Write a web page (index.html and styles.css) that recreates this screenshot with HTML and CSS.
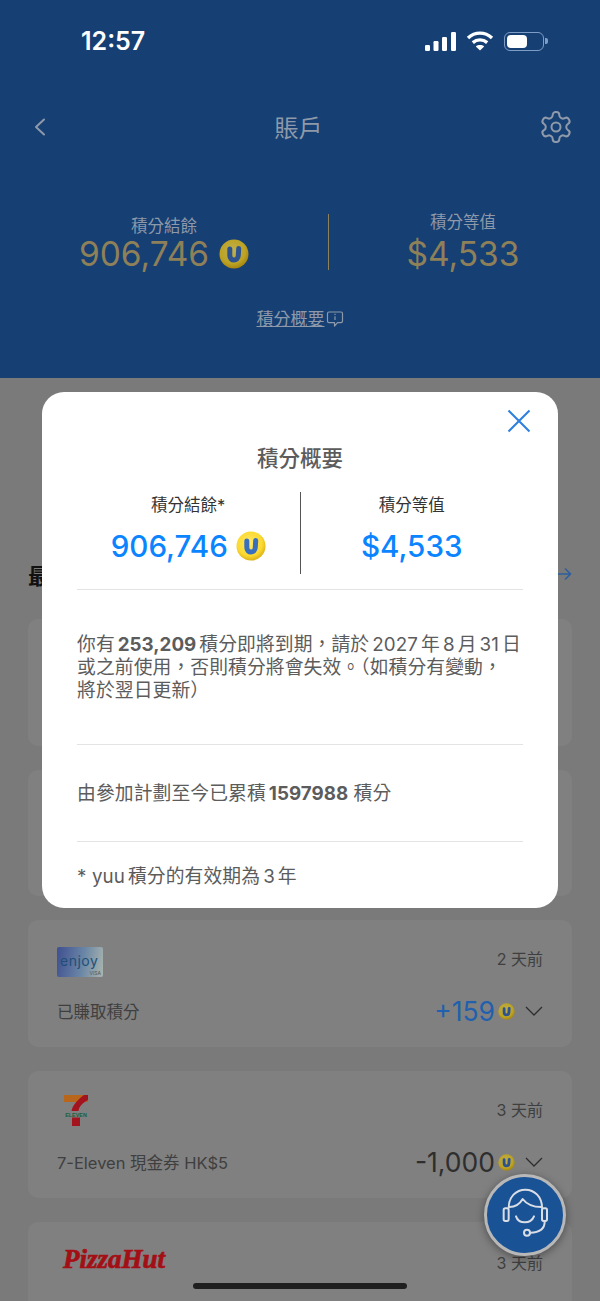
FILE: index.html
```html
<!DOCTYPE html>
<html lang="zh-Hant">
<head>
    <title>賬戶 - 積分概要</title>
    <meta charset="utf-8">
    <meta name="viewport" content="width=device-width, initial-scale=1.0">
    <link rel="stylesheet" href="styles.css">
</head>
<body>
    <!-- shared coin icon -->
    <svg class="defs" aria-hidden="true">
        <defs>
            <radialGradient id="coinFill" cx="45%" cy="40%" r="62%">
                <stop offset="0%" stop-color="#ffe96a"/>
                <stop offset="70%" stop-color="#fbd92f"/>
                <stop offset="100%" stop-color="#dcae14"/>
            </radialGradient>
            <symbol id="coin" viewBox="0 0 30 30">
                <circle cx="15" cy="15" r="14.5" fill="url(#coinFill)"/>
                <path d="M10.800 10 V16.500 C10.800 22.600 19 22.600 19.300 16.500 L19.700 9.500" fill="none" stroke="#3a6fc0" stroke-width="5" stroke-linecap="round"/>
            </symbol>
        </defs>
    </svg>

    <div class="screen">
        <div class="header">
            <div class="status-bar">
                <span class="time">12:57</span>
                <div class="status-icons">
                    <svg width="31" height="19" viewBox="0 0 31 19" fill="#fff">
                        <rect x="0" y="13" width="5" height="6" rx="1.2"/>
                        <rect x="8.5" y="9" width="5" height="10" rx="1.2"/>
                        <rect x="17" y="5" width="5" height="14" rx="1.2"/>
                        <rect x="26" y="0" width="5" height="19" rx="1.2"/>
                    </svg>
                    <svg width="28" height="20" viewBox="0 0 28 20" fill="none" stroke="#fff" stroke-width="3.4">
                        <path d="M2 7 C9 0.5 19 0.5 26 7"/>
                        <path d="M6.8 11.6 C11 8 17 8 21.2 11.6"/>
                        <path d="M14 19.5 L9.8 15.4 C12 13.6 16 13.6 18.2 15.4 Z" fill="#fff" stroke="none"/>
                    </svg>
                    <div class="battery"><div class="battery-fill"></div></div>
                </div>
            </div>

            <div class="nav">
                <svg width="14" height="18" viewBox="0 0 14 18" fill="none" stroke="#8e99a9" stroke-width="2" stroke-linecap="round" stroke-linejoin="round">
                    <path d="M11 1.5 L3 9 L11 16.5"/>
                </svg>
                <span class="nav-title">賬戶</span>
                <svg width="36" height="36" viewBox="0 0 24 24" fill="none" stroke="#8e99a9" stroke-width="1.35" stroke-linejoin="round">
                    <path d="M12.22 2h-.44a2 2 0 0 0-2 2v.18a2 2 0 0 1-1 1.73l-.43.25a2 2 0 0 1-2 0l-.15-.08a2 2 0 0 0-2.73.73l-.22.38a2 2 0 0 0 .73 2.73l.15.1a2 2 0 0 1 1 1.72v.51a2 2 0 0 1-1 1.74l-.15.09a2 2 0 0 0-.73 2.73l.22.38a2 2 0 0 0 2.73.73l.15-.08a2 2 0 0 1 2 0l.43.25a2 2 0 0 1 1 1.73V20a2 2 0 0 0 2 2h.44a2 2 0 0 0 2-2v-.18a2 2 0 0 1 1-1.73l.43-.25a2 2 0 0 1 2 0l.15.08a2 2 0 0 0 2.73-.73l.22-.39a2 2 0 0 0-.73-2.73l-.15-.08a2 2 0 0 1-1-1.74v-.5a2 2 0 0 1 1-1.74l.15-.09a2 2 0 0 0 .73-2.73l-.22-.38a2 2 0 0 0-2.73-.73l-.15.08a2 2 0 0 1-2 0l-.43-.25a2 2 0 0 1-1-1.73V4a2 2 0 0 0-2-2z"/>
                    <circle cx="12" cy="12" r="3"/>
                </svg>
            </div>

            <div class="summary">
                <div class="summary-col summary-left">
                    <div class="summary-label">積分結餘</div>
                    <div class="summary-value">906,746<svg class="coin-lg coin-dim"><use href="#coin"/></svg></div>
                </div>
                <div class="summary-col summary-right">
                    <div class="summary-label">積分等值</div>
                    <div class="summary-value">$4,533</div>
                </div>
            </div>

            <div class="summary-link">
                <span class="summary-link-text">積分概要</span>
                <svg width="18" height="18" viewBox="0 0 18 18" fill="none" stroke="#8e99a9" stroke-width="1.2" stroke-linejoin="round">
                    <path d="M3 2 H15 C16 2 16.5 2.6 16.5 3.5 V11 C16.5 12 16 12.6 15 12.6 H11.5 L8.5 16 V12.6 H3 C2 12.6 1.5 12 1.5 11 V3.5 C1.5 2.6 2 2 3 2 Z"/>
                    <path d="M9 6.2 V10 M9 3.8 V5"/>
                </svg>
            </div>
        </div>

        <div class="content">
            <div class="section-head">
                <span class="section-title">最近交易</span>
                <svg width="16" height="14" viewBox="0 0 16 14" fill="none" stroke="#2c5f9e" stroke-width="1.6">
                    <path d="M1 7 H14.5 M9 1.5 L14.5 7 L9 12.5"/>
                </svg>
            </div>

            <div class="card-list">
                <div class="card"></div>
                <div class="card"></div>

                <div class="card">
                    <div class="card-row">
                        <div class="bank-card">
                            <span class="bank-card-name">enjoy</span>
                            <span class="bank-card-visa">VISA</span>
                        </div>
                        <span class="card-date">2 天前</span>
                    </div>
                    <div class="card-row">
                        <span class="card-label">已賺取積分</span>
                        <div class="card-amount">
                            <span class="amount-plus">+159</span>
                            <svg class="coin-sm coin-dim"><use href="#coin"/></svg>
                            <svg class="chevron" viewBox="0 0 18 10"><path d="M1 1 L9 9 L17 1"/></svg>
                        </div>
                    </div>
                </div>

                <div class="card">
                    <div class="card-row">
                        <svg class="logo-seven" viewBox="0 0 24 31">
                            <path d="M0 0 H24 V7 H0 Z" fill="#b8661c"/>
                            <path d="M24 0 V5 C18 8 15 12 14.500 16 H7.500 C8.500 10 14 4.500 20 0 Z" fill="#a3141e"/>
                            <rect x="8" y="22.500" width="8" height="8.500" fill="#a3141e"/>
                            <text class="logo-seven-text" x="12" y="22" text-anchor="middle">ELEVEN</text>
                        </svg>
                        <span class="card-date">3 天前</span>
                    </div>
                    <div class="card-row">
                        <span class="card-label">7-Eleven 現金券 HK$5</span>
                        <div class="card-amount">
                            <span class="amount-minus">-1,000</span>
                            <svg class="coin-sm coin-dim"><use href="#coin"/></svg>
                            <svg class="chevron" viewBox="0 0 18 10"><path d="M1 1 L9 9 L17 1"/></svg>
                        </div>
                    </div>
                </div>

                <div class="card">
                    <div class="card-row">
                        <span class="logo-pizza">PizzaHut</span>
                        <span class="card-date card-date-low">3 天前</span>
                    </div>
                </div>
            </div>
        </div>

        <div class="home-bar"></div>

        <div class="fab">
            <svg width="76" height="76" viewBox="35 38 228 228" fill="none" stroke="#d9dee6" stroke-width="6" stroke-linecap="round" stroke-linejoin="round">
                <path d="M100 130 C100 98 122 76 150 76 C178 76 200 98 200 130"/>
                <path d="M102 128 C120 128 134 118 142 104 C154 120 174 128 198 128"/>
                <rect x="85" y="132" width="15" height="38" rx="5"/>
                <rect x="200" y="132" width="15" height="38" rx="5"/>
                <path d="M122 156 C130 180 166 180 176 156"/>
                <path d="M208 172 C208 194 190 204 165 205"/>
                <circle cx="155" cy="205" r="9"/>
            </svg>
        </div>

        <div class="modal">
            <svg class="modal-close" width="24" height="24" viewBox="0 0 24 24" fill="none" stroke="#2f80de" stroke-width="2.100">
                <path d="M1.500 1.500 L22.500 22.500 M22.500 1.500 L1.500 22.500"/>
            </svg>
            <h2 class="modal-title">積分概要</h2>

            <div class="modal-stats">
                <div class="modal-col">
                    <div class="modal-label">積分結餘*</div>
                    <div class="modal-value">906,746<svg class="coin-lg"><use href="#coin"/></svg></div>
                </div>
                <div class="modal-col">
                    <div class="modal-label">積分等值</div>
                    <div class="modal-value">$4,533</div>
                </div>
            </div>

            <div class="modal-section modal-expiry">
                你有<span class="gap"></span><b>253,209</b><span class="gap"></span>積分即將到期，請於<span class="gap"></span>2027<span class="gap"></span>年<span class="gap"></span>8<span class="gap"></span>月<span class="gap"></span>31<span class="gap"></span>日<br>
                或之前使用，否則積分將會失效。（如積分有變動，<br>
                將於翌日更新）
            </div>
            <div class="modal-section modal-total">
                由參加計劃至今已累積<span class="gap"></span><b>1597988</b> 積分
            </div>
            <div class="modal-section modal-note">
                * yuu<span class="gap"></span>積分的有效期為<span class="gap"></span>3<span class="gap"></span>年
            </div>
        </div>
    </div>
</body>
</html>
```

FILE: styles.css
```css
* {
    box-sizing: border-box;
}

body {
    margin: 0;
    padding: 0;
    font-family: Inter, "Noto Sans CJK TC", sans-serif;
    background-color: #7a7a7a;
}

.defs {
    position: absolute;
    width: 0;
    height: 0;
}

/* everything behind the modal already carries its dimmed colour */
.screen {
    position: relative;
    width: 600px;
    height: 1301px;
    overflow: hidden;
    background-color: #7a7a7a;
}

.coin-dim {
    filter: brightness(0.75);
}

/* header */
.header {
    height: 378px;
    background-color: #163f73;
    color: #8e99a9;
}

.status-bar {
    height: 82px;
    padding: 0 51px 0 81px;
    display: flex;
    align-items: center;
    justify-content: space-between;
}

.time {
    font-size: 25px;
    font-weight: 600;
    color: #fff;
}

.status-icons {
    display: flex;
    align-items: center;
    gap: 10px;
}

.battery {
    position: relative;
    width: 40px;
    height: 19px;
    padding: 2px;
    margin-right: 5px;
    border: 1.5px solid #7f9cc4;
    border-radius: 6px;
}

.battery::after {
    content: "";
    position: absolute;
    right: -4.500px;
    top: 5px;
    width: 3px;
    height: 6px;
    background-color: #7f9cc4;
    border-radius: 0 2px 2px 0;
}

.battery-fill {
    width: 20px;
    height: 100%;
    background-color: #fff;
    border-radius: 4px;
}

.nav {
    height: 90px;
    padding: 0 26px 0 33px;
    display: flex;
    align-items: center;
    justify-content: space-between;
}

.nav-title {
    margin: -2px 0 0 12px;
    font-size: 24px;
}

.summary {
    height: 56px;
    margin-top: 42px;
    display: flex;
}

.summary-col {
    display: flex;
    flex-direction: column;
    align-items: center;
}

.summary-left {
    width: 329px;
    padding-top: 2px;
    border-right: 1.500px solid #8e8058;
}

.summary-right {
    flex: 1;
    margin-top: -2px;
    padding-right: 3px;
}

.summary-label {
    font-size: 16.500px;
    line-height: 20px;
}

.summary-value {
    display: flex;
    align-items: center;
    gap: 10px;
    margin-top: -2px;
    font-size: 33.500px;
    line-height: 40px;
    color: #8e8058;
}

.summary-right .summary-value {
    margin-top: 2px;
}

.summary-link {
    margin-top: 37px;
    display: flex;
    justify-content: center;
    align-items: center;
    gap: 1px;
}

.summary-link-text {
    font-size: 17px;
    line-height: 24px;
    text-decoration: underline;
}

.coin-lg {
    width: 30px;
    height: 30px;
}

.coin-sm {
    width: 17px;
    height: 17px;
}

/* list under the modal */
.content {
    padding: 180px 28px 0;
}

.section-head {
    height: 32px;
    display: flex;
    align-items: center;
    justify-content: space-between;
}

.section-title {
    font-size: 22px;
    font-weight: 700;
    color: #111;
}

.card-list {
    margin-top: 29px;
    display: flex;
    flex-direction: column;
    gap: 24px;
}

.card {
    height: 126.700px;
    padding: 27px 29px 0;
    background-color: #808080;
    border-radius: 10px;
    display: flex;
    flex-direction: column;
    gap: 18px;
}

.card-row {
    display: flex;
    align-items: center;
    justify-content: space-between;
}

.card-row:first-child {
    height: 30px;
    align-items: flex-start;
}

.card-date {
    font-size: 16px;
    line-height: 24px;
    color: #3f3f3f;
}

.card-date-low {
    margin-top: 2px;
}

.card-label {
    font-size: 16.500px;
    color: #3f3f3f;
}

.card-amount {
    display: flex;
    align-items: center;
    font-size: 26.500px;
}

.amount-plus {
    color: #2160ae;
}

.amount-minus {
    color: #2e2e2e;
}

.card-amount .coin-sm {
    margin-left: 3px;
}

.chevron {
    width: 18px;
    height: 10px;
    margin-left: 10px;
    fill: none;
    stroke: #2e2e2e;
    stroke-width: 1.300;
}

.bank-card {
    position: relative;
    width: 46px;
    height: 30px;
    border-radius: 2px;
    background: linear-gradient(100deg, #3f4f90 0%, #6a86a6 55%, #aab5ae 100%);
    overflow: hidden;
}

.bank-card-name {
    position: absolute;
    left: 3px;
    top: 5px;
    font-size: 14px;
    letter-spacing: 0.5px;
    color: #1f4f78;
}

.bank-card-visa {
    position: absolute;
    right: 2px;
    bottom: 1px;
    font-size: 5px;
    color: #555;
}

.logo-seven {
    width: 24px;
    height: 31px;
    margin: -3px 0 0 7px;
}

.logo-seven-text {
    font-family: "Liberation Sans", sans-serif;
    font-size: 5.400px;
    font-weight: 700;
    fill: #17603e;
}

.logo-pizza {
    margin: -5px 0 0 6px;
    font-family: "Liberation Serif", serif;
    font-size: 27px;
    line-height: 30px;
    font-style: italic;
    font-weight: 700;
    color: #a30f15;
    -webkit-text-stroke: 0.7px #a30f15;
}

.home-bar {
    position: absolute;
    left: 193px;
    bottom: 12px;
    width: 214px;
    height: 6px;
    border-radius: 3px;
    background-color: #1f1f1f;
}

.fab {
    position: absolute;
    left: 484px;
    top: 1174px;
    width: 82px;
    height: 82px;
    border: 3px solid #b8b8b8;
    border-radius: 50%;
    background-color: #1a5296;
    box-shadow: 0 2px 8px rgba(0, 0, 0, 0.4);
}

/* modal */
.modal {
    position: absolute;
    left: 42px;
    top: 392px;
    width: 516px;
    height: 516px;
    padding: 52px 35px 0;
    background-color: #fff;
    border-radius: 22px;
    color: #5c5c5c;
}

.modal-close {
    position: absolute;
    right: 27px;
    top: 17px;
}

.modal-title {
    margin: 0;
    font-size: 21.500px;
    font-weight: 500;
    line-height: 28px;
    text-align: center;
}

.modal-stats {
    height: 82px;
    margin-top: 20px;
    display: flex;
}

.modal-col {
    flex: 1;
    display: flex;
    flex-direction: column;
    align-items: center;
}

.modal-col:first-child {
    border-right: 1px solid #555;
}

.modal-label {
    font-size: 16.500px;
    line-height: 26px;
    color: #333;
}

.modal-value {
    display: flex;
    align-items: center;
    gap: 8px;
    margin-top: 8px;
    font-size: 29.600px;
    font-weight: 500;
    line-height: 40px;
    color: #0a84ff;
}

.modal-section {
    font-size: 18.800px;
    letter-spacing: 0.1px;
    line-height: 23px;
    white-space: nowrap;
    border-top: 1px solid #e3e3e3;
}

.modal-section b {
    font-weight: 700;
    letter-spacing: 0;
}

.gap {
    display: inline-block;
    width: 3px;
}

.modal-expiry {
    margin-top: 15px;
    padding: 43px 0 42px;
}

.modal-total {
    padding: 37px 0 36px;
}

.modal-note {
    padding-top: 23px;
}
```
